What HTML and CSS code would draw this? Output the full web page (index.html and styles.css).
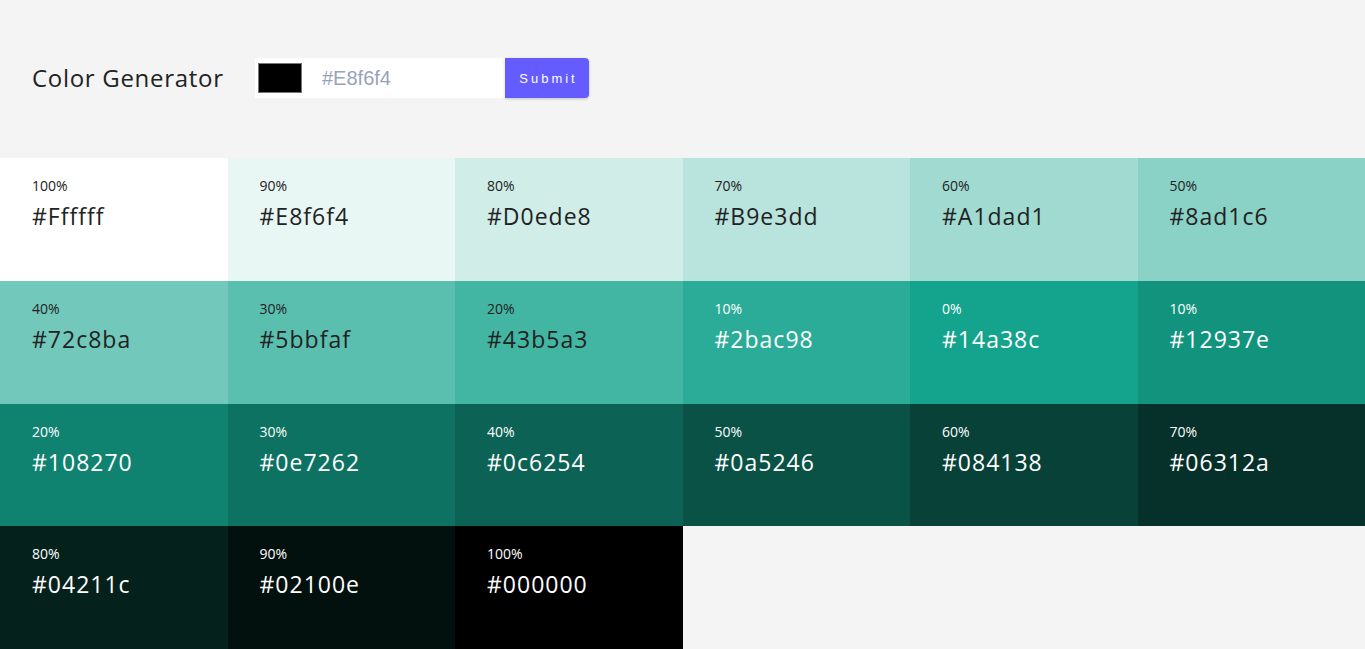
FILE: index.html
```html
<!DOCTYPE html>
<html lang="en">
<head>
<meta charset="utf-8">
<title>Color Generator</title>
<link rel="stylesheet" href="styles.css">
</head>
<body>
<section class="container">
  <h3 class="title">Color Generator</h3>
  <form class="color-form">
    <input type="color" class="color-input" value="#000000">
    <input type="text" class="text-input" placeholder="#E8f6f4">
    <button type="submit" class="btn">Submit</button>
  </form>
</section>
<section class="colors">
  <article class="color" style="background:#ffffff"><p class="percent">100%</p><p class="hex">#Ffffff</p></article>
  <article class="color" style="background:#e8f6f4"><p class="percent">90%</p><p class="hex">#E8f6f4</p></article>
  <article class="color" style="background:#d0ede8"><p class="percent">80%</p><p class="hex">#D0ede8</p></article>
  <article class="color" style="background:#b9e3dd"><p class="percent">70%</p><p class="hex">#B9e3dd</p></article>
  <article class="color" style="background:#a1dad1"><p class="percent">60%</p><p class="hex">#A1dad1</p></article>
  <article class="color" style="background:#8ad1c6"><p class="percent">50%</p><p class="hex">#8ad1c6</p></article>
  <article class="color" style="background:#72c8ba"><p class="percent">40%</p><p class="hex">#72c8ba</p></article>
  <article class="color" style="background:#5bbfaf"><p class="percent">30%</p><p class="hex">#5bbfaf</p></article>
  <article class="color" style="background:#43b5a3"><p class="percent">20%</p><p class="hex">#43b5a3</p></article>
  <article class="color light" style="background:#2bac98"><p class="percent">10%</p><p class="hex">#2bac98</p></article>
  <article class="color light" style="background:#14a38c"><p class="percent">0%</p><p class="hex">#14a38c</p></article>
  <article class="color light" style="background:#12937e"><p class="percent">10%</p><p class="hex">#12937e</p></article>
  <article class="color light" style="background:#108270"><p class="percent">20%</p><p class="hex">#108270</p></article>
  <article class="color light" style="background:#0e7262"><p class="percent">30%</p><p class="hex">#0e7262</p></article>
  <article class="color light" style="background:#0c6254"><p class="percent">40%</p><p class="hex">#0c6254</p></article>
  <article class="color light" style="background:#0a5246"><p class="percent">50%</p><p class="hex">#0a5246</p></article>
  <article class="color light" style="background:#084138"><p class="percent">60%</p><p class="hex">#084138</p></article>
  <article class="color light" style="background:#06312a"><p class="percent">70%</p><p class="hex">#06312a</p></article>
  <article class="color light" style="background:#04211c"><p class="percent">80%</p><p class="hex">#04211c</p></article>
  <article class="color light" style="background:#02100e"><p class="percent">90%</p><p class="hex">#02100e</p></article>
  <article class="color light" style="background:#000000"><p class="percent">100%</p><p class="hex">#000000</p></article>
</section>
</body>
</html>
```
FILE: styles.css
```css
* { box-sizing: border-box; margin: 0; padding: 0; }
body {
  background: #f4f4f4;
  font-family: "Open Sans", "Noto Sans", sans-serif;
  color: #102a42;
}
.container {
  display: flex;
  align-items: center;
  padding: 58px 32px 60px;
}
.title {
  font-size: 24px;
  font-weight: 400;
  letter-spacing: 0.7px;
  color: #222;
  width: 223px;
  line-height: 40px;
}
.color-form {
  display: flex;
  align-items: center;
  height: 40px;
  background: #fff;
}
.color-input {
  -webkit-appearance: none;
  appearance: none;
  width: 47px;
  height: 40px;
  border: none;
  background: #fff;
  padding: 5px 0 5px 3px;
  cursor: pointer;
}
.color-input::-webkit-color-swatch-wrapper { padding: 0; }
.color-input::-webkit-color-swatch { border: 1px solid #767676; border-radius: 0; }
.text-input {
  width: 203px;
  height: 40px;
  border: none;
  outline: none;
  background: #fff;
  padding: 0 18px 0 20px;
  font-family: "Liberation Sans", Arial, sans-serif;
  font-size: 20px;
  color: #222;
}
.text-input::placeholder { color: #97a3ba; }
.btn {
  width: 84px;
  height: 40px;
  border: none;
  background: #645cff;
  color: #fff;
  font-family: "Liberation Sans", Arial, sans-serif;
  font-size: 13px;
  letter-spacing: 3px;
  padding-left: 3px;
  border-radius: 0 4px 4px 0;
  box-shadow: 0 1px 3px rgba(0,0,0,0.2);
  cursor: pointer;
}
.colors {
  display: grid;
  grid-template-columns: repeat(6, 1fr);
  grid-auto-rows: 122.75px;
}
.color {
  padding: 17px 32px;
  color: #222;
}
.color.light { color: #fff; }
.percent {
  font-size: 14px;
  line-height: 22px;
  margin-bottom: 1px;
}
.hex {
  font-size: 23px;
  line-height: 36px;
  letter-spacing: 1px;
}
```
